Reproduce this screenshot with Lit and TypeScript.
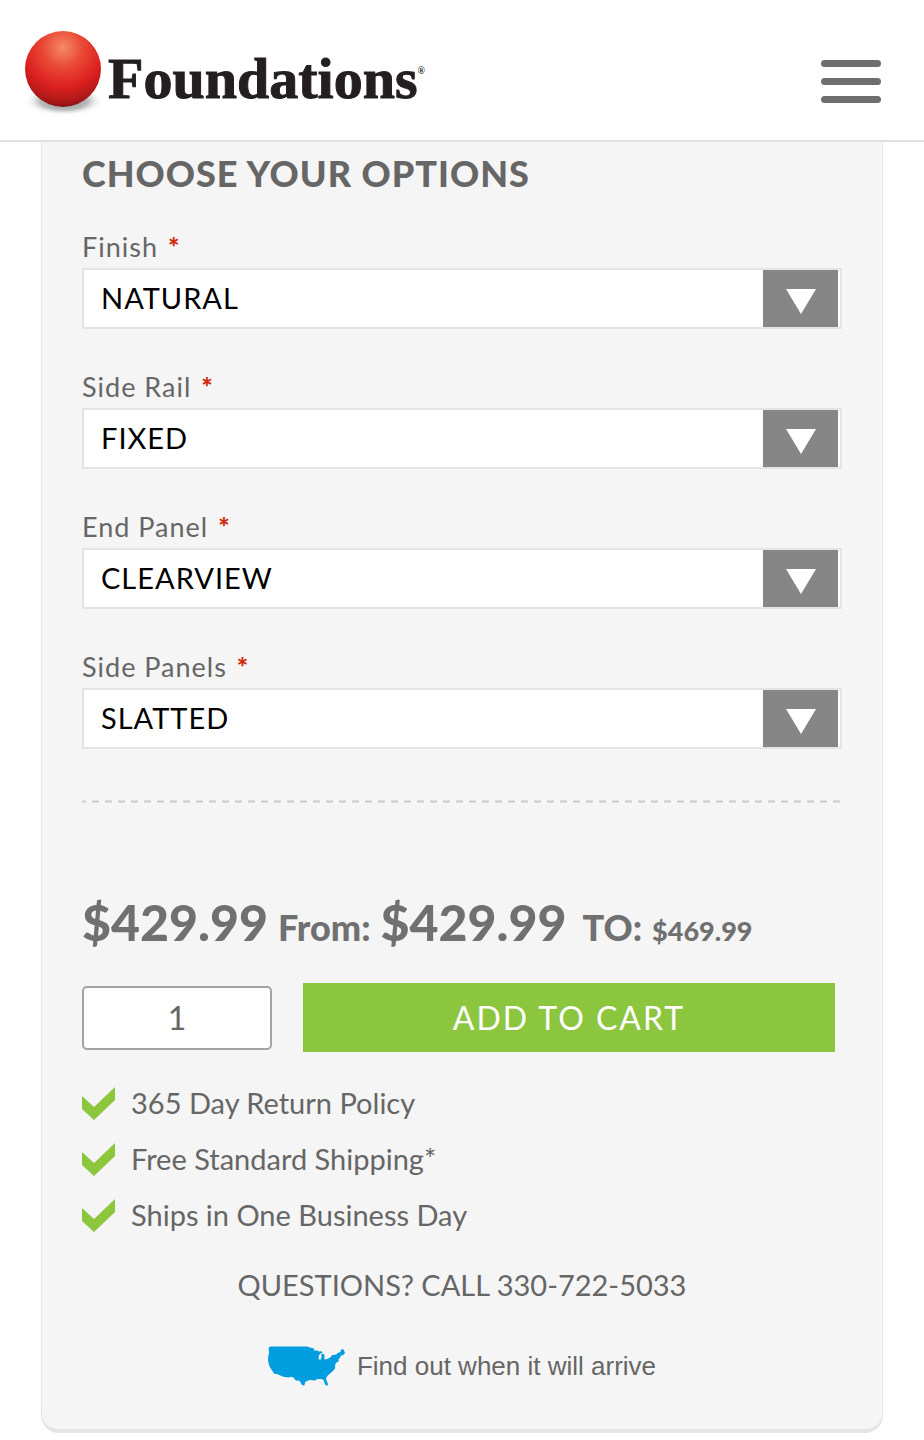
import { LitElement, html, css, svg } from "lit";
import { customElement, property, state } from "lit/decorators.js";

@customElement("option-field")
class OptionField extends LitElement {
  @property() label = "";
  @property({ type: Array }) choices: string[] = [];

  static styles = css`
    :host { display: block; }
    .label {
      display: block;
      font-size: 27px;
      line-height: 32px;
      letter-spacing: 1px;
      color: #666;
      margin-bottom: 5px;
    }
    .star { color: #cf2a0e; font-weight: 900; margin-left: 2px; }
    .box {
      display: grid;
      grid-template-columns: minmax(0, 1fr) 75px;
      height: 57px;
      padding-right: 2px;
      border: 2px solid #e4e4e4;
      background: #fff;
    }
    .select {
      grid-area: 1 / 1 / 2 / 3;
      appearance: none;
      border: 0;
      margin: 0;
      padding: 0 90px 2px 17px;
      background: transparent;
      color: #000;
      font: inherit;
      font-size: 29px;
      letter-spacing: 1px;
      text-transform: uppercase;
    }
    .arrow {
      grid-area: 1 / 2 / 2 / 3;
      display: grid;
      place-items: center;
      padding-top: 6px;
      background: #868686;
      pointer-events: none;
    }
    .arrow svg { display: block; }
  `;

  render() {
    return html`
      <label class="label" for="field">${this.label} <span class="star">*</span></label>
      <div class="box">
        <select class="select" id="field" required>
          ${this.choices.map((c) => html`<option>${c}</option>`)}
        </select>
        <span class="arrow" aria-hidden="true">
          <svg width="30" height="25" viewBox="0 0 30 25"><path d="M0 0H30L15 25Z" fill="#fff" /></svg>
        </span>
      </div>
    `;
  }
}

const check = svg`<path d="M0 9L12 20L33 0V13L12 33L0 22Z" fill="#8cc63f" />`;

@customElement("app-root")
class AppRoot extends LitElement {
  @state() private options = [
    { label: "Finish", choices: ["Natural"] },
    { label: "Side Rail", choices: ["Fixed"] },
    { label: "End Panel", choices: ["Clearview"] },
    { label: "Side Panels", choices: ["Slatted"] },
  ];
  private perks = ["365 Day Return Policy", "Free Standard Shipping*", "Ships in One Business Day"];

  static styles = css`
    :host {
      display: block;
      min-height: 100vh;
      background: #fff;
      color: #666;
      font-family: Lato, "Open Sans", sans-serif;
    }
    .header {
      display: flex;
      align-items: center;
      justify-content: space-between;
      height: 140px;
      padding: 0 43px 0 24px;
      border-bottom: 2px solid #e2dfdf;
    }
    .logo { display: flex; align-items: center; color: #231f20; text-decoration: none; }
    .ball { display: block; margin-top: 6px; }
    .wordmark {
      margin-top: 18px;
      font-family: "Liberation Serif", serif;
      font-weight: 700;
      font-size: 58px;
      line-height: 64px;
      -webkit-text-stroke: 1px #231f20;
    }
    .reg { font-size: 10px; vertical-align: 24px; line-height: 10px; -webkit-text-stroke: 0; }
    .menu {
      display: grid;
      gap: 11px;
      width: 60px;
      margin-top: 22px;
      padding: 0;
      border: 0;
      background: none;
    }
    .bar { height: 7px; border-radius: 4px; background: #6e6e6e; }
    .card {
      margin: 0 41px;
      padding: 12px 40px 43px;
      border: 1px solid #e6e4e4;
      border-top: 0;
      border-bottom: 4px solid #e6e4e4;
      border-radius: 0 0 18px 18px;
      background: #f5f5f5;
    }
    .title {
      margin: 0 0 39px;
      font-size: 36px;
      line-height: 38px;
      font-weight: 900;
      letter-spacing: 1px;
    }
    .fields { display: grid; gap: 42px; }
    .rule { display: block; width: 100%; height: 3px; margin: 51px 0 89px; }
    .prices {
      display: flex;
      align-items: baseline;
      margin: 0 0 22px;
      line-height: 60px;
      font-weight: 900;
      color: #707070;
    }
    .big { font-size: 50px; }
    .word { font-size: 36px; margin: 0 10px; }
    .to { margin-left: 16px; }
    .small { font-size: 27px; }
    .buy { display: flex; align-items: center; gap: 31px; margin-right: 7px; }
    .qty {
      box-sizing: border-box;
      width: 190px;
      height: 64px;
      border: 2px solid #a3a3a3;
      border-radius: 5px;
      background: #fff;
      color: #666;
      font: inherit;
      font-size: 32px;
      text-align: center;
    }
    .add {
      flex: 1;
      height: 69px;
      padding: 0;
      border: 0;
      background: #8cc63f;
      color: #fff;
      font: inherit;
      font-size: 32px;
      letter-spacing: 2px;
    }
    .perks { display: grid; gap: 16px; margin: 31px 0 0; padding: 0; list-style: none; }
    .perk {
      display: flex;
      align-items: center;
      gap: 16px;
      font-size: 29px;
      line-height: 40px;
    }
    .questions {
      margin: 30px 0 0;
      text-align: center;
      font-size: 29px;
      line-height: 40px;
    }
    .phone { color: inherit; text-decoration: none; }
    .arrive {
      display: flex;
      align-items: center;
      justify-content: center;
      gap: 12px;
      margin-top: 41px;
      color: #666;
      font-family: "Liberation Sans", sans-serif;
      font-size: 26px;
      line-height: 40px;
      text-decoration: none;
    }
  `;

  render() {
    return html`
      <header class="header">
        <a class="logo" href="#">
          <svg class="ball" width="84" height="90" viewBox="0 0 84 90" aria-hidden="true">
            <defs>
              <radialGradient id="red" cx="0.5" cy="0.22" r="0.8">
                <stop offset="0" stop-color="#f58a68" />
                <stop offset="0.32" stop-color="#ea4a36" />
                <stop offset="0.65" stop-color="#dc2020" />
                <stop offset="0.88" stop-color="#b01818" />
                <stop offset="1" stop-color="#7d1210" />
              </radialGradient>
              <radialGradient id="shade">
                <stop offset="0" stop-color="#6f7678" stop-opacity="0.9" />
                <stop offset="0.6" stop-color="#8b9092" stop-opacity="0.6" />
                <stop offset="1" stop-color="#fff" stop-opacity="0" />
              </radialGradient>
            </defs>
            <ellipse cx="40" cy="73" rx="40" ry="15" fill="url(#shade)" />
            <circle cx="39" cy="41" r="38" fill="url(#red)" />
          </svg>
          <span class="wordmark">Foundations<span class="reg">®</span></span>
        </a>
        <button class="menu" type="button" aria-label="Menu">
          <span class="bar"></span><span class="bar"></span><span class="bar"></span>
        </button>
      </header>

      <main class="card">
        <h1 class="title">CHOOSE YOUR OPTIONS</h1>
        <div class="fields">
          ${this.options.map(
            (o) => html`<option-field .label=${o.label} .choices=${o.choices}></option-field>`
          )}
        </div>
        <svg class="rule" aria-hidden="true">
          <line x1="0" y1="1.5" x2="100%" y2="1.5" stroke="#cbcbcb" stroke-width="2" stroke-dasharray="7 6" stroke-dashoffset="3" />
        </svg>
        <p class="prices">
          <span class="big">$429.99</span><span class="word">From:</span><span class="big">$429.99</span
          ><span class="word to">TO:</span><span class="small">$469.99</span>
        </p>
        <div class="buy">
          <input class="qty" type="text" inputmode="numeric" value="1" aria-label="Quantity" />
          <button class="add" type="button">ADD TO CART</button>
        </div>
        <ul class="perks">
          ${this.perks.map(
            (p) => html`<li class="perk">
              <svg width="33" height="33" viewBox="0 0 33 33" aria-hidden="true">${check}</svg>${p}
            </li>`
          )}
        </ul>
        <p class="questions">QUESTIONS? CALL <a class="phone" href="tel:330-722-5033">330-722-5033</a></p>
        <a class="arrive" href="#">
          <svg width="77" height="40" viewBox="0 0 230 118" aria-hidden="true">
            <path
              fill="#009ddf"
              d="M8 1H118L124 4L133 5L139 9L136 13L147 13L152 16L160 15L163 20L157 22L152 28L151 38L156 41L160 33L159 25L165 22L169 28L168 39L176 39L188 32L190 27L204 25L208 20L216 17L219 9L226 10L230 20L224 27L218 28L215 34L210 40L212 44L203 50L200 58L201 65L196 72L187 80L177 89L173 97L179 112L178 118L171 116L166 101L159 98L147 98L141 102L124 101L112 106L108 118L101 115L94 103L83 102L76 93L67 91L62 93L45 91L29 84L19 82L13 74L5 61L1 48L0 34L3 20L2 4Z"
            />
          </svg>
          <span>Find out when it will arrive</span>
        </a>
      </main>
    `;
  }
}
